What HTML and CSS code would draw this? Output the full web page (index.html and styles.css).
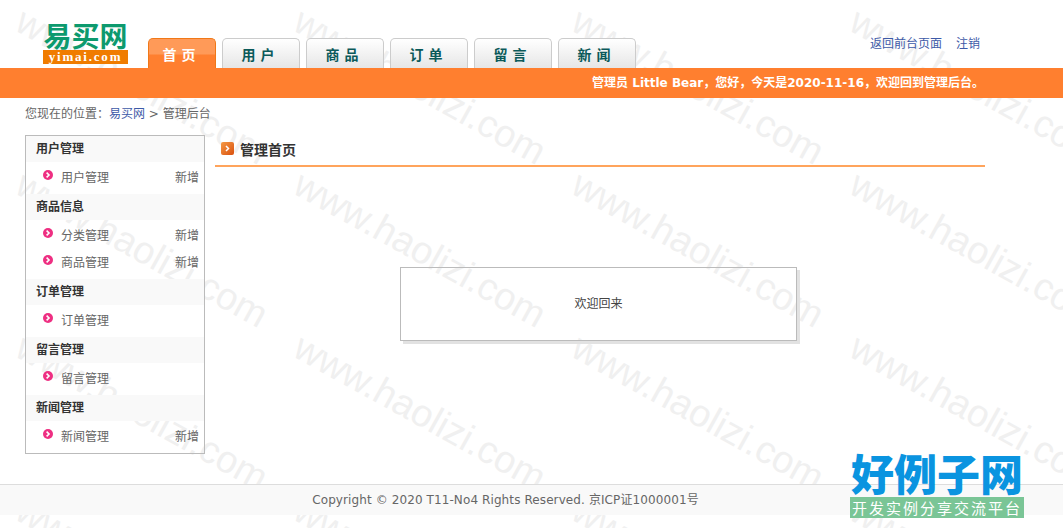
FILE: index.html
```html
<!DOCTYPE html>
<html lang="zh-CN">
<head>
    <meta charset="UTF-8">
    <title>易买网 - 管理后台</title>
    <link rel="stylesheet" href="styles.css">
</head>
<body>
    <div class="watermark">
        <span>www.haolizi.com</span><span>www.haolizi.com</span><span>www.haolizi.com</span><span>www.haolizi.com</span>
        <span>www.haolizi.com</span><span>www.haolizi.com</span><span>www.haolizi.com</span><span>www.haolizi.com</span>
        <span>www.haolizi.com</span><span>www.haolizi.com</span><span>www.haolizi.com</span><span>www.haolizi.com</span>
        <span>www.haolizi.com</span><span>www.haolizi.com</span><span>www.haolizi.com</span><span>www.haolizi.com</span>
    </div>

    <div class="header">
        <div class="logo">
            <div class="logo-name">易买网</div>
            <div class="logo-url">yimai.com</div>
        </div>
        <ul class="tabs">
            <li class="active">首 页</li>
            <li>用 户</li>
            <li>商 品</li>
            <li>订 单</li>
            <li>留 言</li>
            <li>新 闻</li>
        </ul>
        <div class="help">
            <a href="#">返回前台页面</a>
            <a href="#">注销</a>
        </div>
    </div>

    <div class="welcome">管理员 Little Bear，您好，今天是2020-11-16，欢迎回到管理后台。</div>

    <div class="crumb">您现在的位置：<a href="#">易买网</a> &gt; 管理后台</div>

    <div class="main">
        <div class="menu">
            <h2>用户管理</h2>
            <ul>
                <li>
                    <svg class="dot" viewBox="0 0 10 10"><circle cx="5" cy="5" r="5"/><path d="M3.6 2.7 6 5 3.6 7.3"/></svg>
                    <a href="#">用户管理</a><a class="add" href="#">新增</a>
                </li>
            </ul>
            <h2>商品信息</h2>
            <ul>
                <li>
                    <svg class="dot" viewBox="0 0 10 10"><circle cx="5" cy="5" r="5"/><path d="M3.6 2.7 6 5 3.6 7.3"/></svg>
                    <a href="#">分类管理</a><a class="add" href="#">新增</a>
                </li>
                <li>
                    <svg class="dot" viewBox="0 0 10 10"><circle cx="5" cy="5" r="5"/><path d="M3.6 2.7 6 5 3.6 7.3"/></svg>
                    <a href="#">商品管理</a><a class="add" href="#">新增</a>
                </li>
            </ul>
            <h2>订单管理</h2>
            <ul>
                <li>
                    <svg class="dot" viewBox="0 0 10 10"><circle cx="5" cy="5" r="5"/><path d="M3.6 2.7 6 5 3.6 7.3"/></svg>
                    <a href="#">订单管理</a>
                </li>
            </ul>
            <h2>留言管理</h2>
            <ul>
                <li>
                    <svg class="dot" viewBox="0 0 10 10"><circle cx="5" cy="5" r="5"/><path d="M3.6 2.7 6 5 3.6 7.3"/></svg>
                    <a href="#">留言管理</a>
                </li>
            </ul>
            <h2>新闻管理</h2>
            <ul>
                <li>
                    <svg class="dot" viewBox="0 0 10 10"><circle cx="5" cy="5" r="5"/><path d="M3.6 2.7 6 5 3.6 7.3"/></svg>
                    <a href="#">新闻管理</a><a class="add" href="#">新增</a>
                </li>
            </ul>
        </div>

        <div class="content">
            <h1>
                <svg class="title-icon" viewBox="0 0 13 13">
                    <defs>
                        <linearGradient id="titleFill" x1="0" y1="0" x2="1" y2="1">
                            <stop offset="0" stop-color="#f59a45"/>
                            <stop offset="1" stop-color="#d9500f"/>
                        </linearGradient>
                    </defs>
                    <rect width="13" height="13" rx="2" fill="url(#titleFill)"/>
                    <path d="M5 4 7.5 6.5 5 9" fill="none" stroke="#fff" stroke-width="1.5"/>
                </svg>
                管理首页
            </h1>
            <div class="notice">欢迎回来</div>
        </div>
    </div>

    <div class="footer">Copyright © 2020 T11-No4 Rights Reserved. 京ICP证1000001号</div>

    <div class="badge">
        <div class="badge-name">好例子网</div>
        <div class="badge-sub">开发实例分享交流平台</div>
    </div>
</body>
</html>
```

FILE: styles.css
```css
html, body {
    height: 528px;
    overflow: hidden;
}
body {
    margin: 0;
    position: relative;
    background: #fff;
    color: #666;
    font: 12px/1.5 "DejaVu Sans", "Noto Sans CJK SC", sans-serif;
}
ul {
    list-style: none;
    margin: 0;
    padding: 0;
}
a {
    color: #666;
    text-decoration: none;
}

/* watermark sits behind everything */
.watermark {
    position: absolute;
    top: 0;
    left: 0;
    right: 0;
    bottom: 0;
    padding: 5px 3px;
    overflow: hidden;
    z-index: -1;
    display: grid;
    grid-template-columns: repeat(4, 278px);
    grid-auto-rows: 163px;
}
.watermark span {
    display: flex;
    align-items: center;
    justify-content: center;
    white-space: nowrap;
    font: 38px "Liberation Sans", sans-serif;
    color: #f0f0f0;
    transform: rotate(29deg);
}

.header {
    height: 68px;
    display: flex;
    align-items: flex-end;
    padding-left: 43px;
    padding-right: 83px;
}
.logo {
    width: 85px;
    height: 43px;
    margin-right: 20px;
    margin-bottom: 4px;
}
.logo-name {
    font: bold 28px/28px "Noto Sans CJK SC", sans-serif;
    color: #0d9a6e;
    text-align: center;
    white-space: nowrap;
}
.logo-url {
    margin-top: 1px;
    height: 14px;
    background: #f07c00;
    color: #fff;
    font: bold 13px/13px "Liberation Serif", serif;
    letter-spacing: 1.8px;
    text-align: center;
    overflow: hidden;
}
.tabs {
    display: flex;
    gap: 6px;
    flex: 1;
}
.tabs li {
    box-sizing: border-box;
    width: 78px;
    height: 30px;
    padding-right: 6px;
    border: 1px solid #ccc;
    border-bottom: 0;
    border-radius: 5px 5px 0 0;
    background: linear-gradient(#fff, #e6e6e6);
    color: #0b5a5a;
    font-size: 14px;
    font-weight: bold;
    line-height: 32px;
    text-align: center;
}
.tabs li.active {
    width: 68px;
    border-color: #f07818;
    background: linear-gradient(#ff9a58 0, #ff9a58 15px, #ff7f2f 16px);
    color: #fff;
}
.help {
    display: flex;
    gap: 14px;
    margin-bottom: 15px;
}
.help a {
    color: #3d5aa8;
}

.welcome {
    height: 30px;
    padding-right: 79px;
    background: #ff7f2f;
    color: #fff;
    font-weight: bold;
    line-height: 30px;
    text-align: right;
}

.crumb {
    height: 37px;
    padding-left: 25px;
    line-height: 32px;
}
.crumb a {
    color: #3d5aa8;
}

.main {
    display: flex;
    padding-left: 25px;
}
.menu {
    box-sizing: border-box;
    width: 180px;
    height: 319px;
    border: 1px solid #bbb;
}
.menu h2 {
    margin: 0;
    padding-left: 10px;
    height: 26px;
    background: #f9f9f9;
    color: #333;
    font-size: 12px;
    line-height: 26px;
}
.menu ul {
    padding-bottom: 5px;
}
.menu li {
    height: 27px;
    display: flex;
    align-items: center;
    padding: 4px 5px 0 17px;
    box-sizing: border-box;
}
.dot {
    width: 10px;
    height: 10px;
    margin-right: 8px;
    margin-top: -6px;
}
.dot circle {
    fill: #ee2f82;
}
.dot path {
    fill: none;
    stroke: #fff;
    stroke-width: 1.6;
}
.add {
    margin-left: auto;
}

.content {
    width: 770px;
    margin-left: 10px;
}
.content h1 {
    margin: 0;
    box-sizing: border-box;
    height: 32px;
    padding-left: 6px;
    display: flex;
    align-items: center;
    gap: 6px;
    border-bottom: 2px solid #ffa45c;
    color: #333;
    font-size: 14px;
    line-height: 28px;
}
.title-icon {
    width: 13px;
    height: 13px;
    margin-top: -3px;
}
.notice {
    box-sizing: border-box;
    width: 397px;
    height: 74px;
    margin: 100px 0 0 185px;
    border: 1px solid #bbb;
    box-shadow: 3px 3px 0 #e2e2e2;
    line-height: 72px;
    text-align: center;
    color: #444;
}

.footer {
    position: absolute;
    top: 484px;
    left: 0;
    right: 0;
    box-sizing: border-box;
    height: 31px;
    padding-right: 52px;
    border-top: 1px solid #ddd;
    background: #f9f9f9;
    letter-spacing: 0.1px;
    line-height: 30px;
    text-align: center;
}

/* site badge over the bottom right corner */
.badge {
    position: absolute;
    top: 448px;
    left: 850px;
    width: 174px;
}
.badge-name {
    font: 900 43px/49px "Noto Sans CJK SC", sans-serif;
    color: #0a94e0;
    text-align: center;
    white-space: nowrap;
}
.badge-sub {
    height: 21px;
    background: #7ac596;
    color: #fff;
    font: 15px/21px "Noto Sans CJK SC", sans-serif;
    letter-spacing: 2px;
    text-align: center;
    white-space: nowrap;
}
```
